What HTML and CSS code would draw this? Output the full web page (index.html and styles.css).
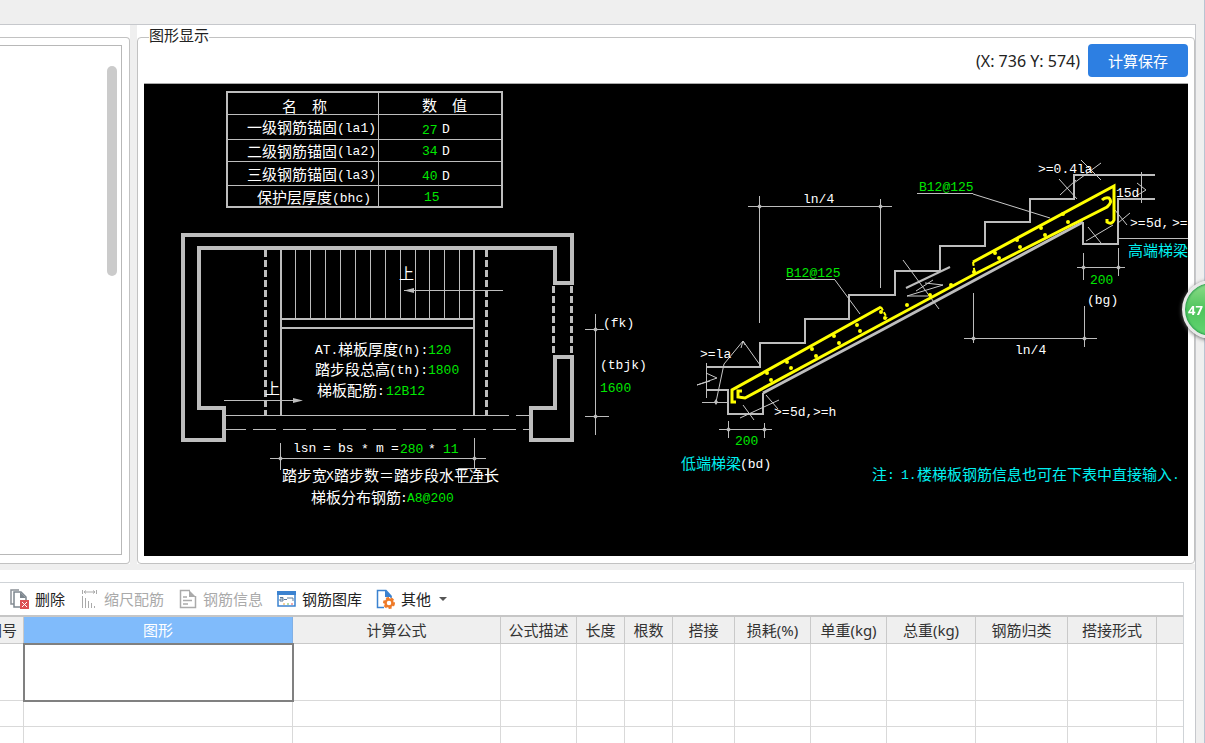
FILE: index.html
```html
<!DOCTYPE html>
<html lang="zh-CN">
<head>
<meta charset="utf-8">
<title>图形显示</title>
<link rel="stylesheet" href="styles.css">
</head>
<body>
<main class="window">
  <div class="upper">
    <section class="side">
      <div class="side-list"><div class="scroll-thumb"></div></div>
    </section>
    <section class="pane">
    <fieldset class="viewer">
      <legend>图形显示</legend>
      <div class="viewer-bar">
        <span class="coords">(X: 736 Y: 574)</span>
        <button class="primary" type="button">计算保存</button>
      </div>
      <svg class="cad" viewBox="144 84 1044 472" role="img" aria-label="AT 型楼梯配筋图">
        <!-- parameter table -->
        <g class="line crisp">
          <rect class="mid" x="227" y="92" width="275" height="115"/>
          <path d="M378.500 92V207M227 114.500H502M227 139.500H502M227 161.500H502M227 185.500H502"/>
        </g>
        <g class="cjk">
          <text x="282" y="112">名</text><text x="312" y="112">称</text>
          <text x="422" y="111">数</text><text x="452" y="111">值</text>
          <text x="247" y="133">一级钢筋锚固</text><text x="247" y="157">二级钢筋锚固</text>
          <text x="247" y="180">三级钢筋锚固</text><text x="257" y="203">保护层厚度</text>
        </g>
        <g class="mono">
          <text x="337" y="132">(la1)</text><text x="337" y="155">(la2)</text>
          <text x="337" y="179">(la3)</text><text x="332" y="202">(bhc)</text>
          <text x="442" y="133">D</text><text x="442" y="155">D</text><text x="442" y="180">D</text>
        </g>
        <g class="mono green">
          <text x="422" y="134">27</text><text x="422" y="155">34</text>
          <text x="422" y="180">40</text><text x="424" y="201">15</text>
        </g>

        <!-- plan: walls -->
        <g class="line crisp">
          <path class="wall" d="M572 285V235H183V440H224V408H199V248H555V283H572M572 355V440H531V408H555V357H574"/>
          <path class="dash-v" d="M265.500 250V415M486.500 250V415M553.500 286V355M571.500 286V355"/>
          <path class="mid" d="M281 248V415M474 248V415M280 319H474M280 328H474"/>
          <path d="M295.500 250V318M310.500 250V318M325.500 250V318M340.500 250V318M355.500 250V318M370.500 250V318M385.500 250V318M400.500 250V318M415.500 250V318M429.500 250V318M444.500 250V318M459.500 250V318"/>
          <path d="M226 415.500H509M516 415.500H530M404 290.500H503M224 400.500H300"/>
          <path class="dash-h" d="M223 429.500H530"/>
          <path d="M595.500 314V435M585 329.500H604M585 416.500H609M270 458.500H486M280.500 443V470M474.500 438V468"/>
          <rect x="458.500" y="468.500" width="29" height="14"/>
        </g>
        <path class="fill" d="M404 290.500L414 288V293ZM303 400.500L293 398V403ZM278 458.500L280.500 456L283 458.500L280.500 461ZM472 458.500L474.500 456L477 458.500L474.500 461ZM593 329.500L595.500 327L598 329.500L595.500 332ZM593 416.500L595.500 414L598 416.500L595.500 419Z"/>
        <g class="cjk">
          <text x="399" y="279">上</text><text x="265" y="394">上</text>
          <text x="338" y="355">梯板厚度</text><text x="315" y="375">踏步段总高</text><text x="317" y="396">梯板配筋</text>
          <text x="282" y="481">踏步宽</text><text x="334" y="481">踏步数</text><text x="379" y="481">＝踏步段水平净长</text>
          <text x="311" y="503">梯板分布钢筋</text>
        </g>
        <g class="mono">
          <text x="315" y="354">AT.</text><text x="397" y="354">(h):</text><text x="389" y="374">(th):</text><text x="377" y="395">:</text>
          <text x="293" y="452">lsn</text><text x="323" y="452">=</text><text x="338" y="452">bs</text><text x="361" y="453">*</text><text x="376" y="452">m</text><text x="391" y="452">=</text><text x="428" y="453">*</text>
          <text x="326" y="480">X</text><text x="400" y="502">:</text>
          <text x="603" y="327">(fk)</text><text x="600" y="369">(tbjk)</text>
        </g>
        <g class="mono green">
          <text x="428" y="354">120</text><text x="428" y="374">1800</text><text x="386" y="395">12B12</text>
          <text x="400" y="453">280</text><text x="443" y="453">11</text><text x="407" y="502">A8@200</text>
          <text x="600" y="392">1600</text>
        </g>

        <!-- elevation: concrete outline -->
        <g class="line crisp mid">
          <path d="M707 367H760V343H805V319H849V295H895V271H940V246H985V222H1030V199H1074V175H1155"/>
          <path d="M707 390H728V414H763V393M1083 222V244H1118V199H1155"/>
        </g>
        <g class="line">
          <path class="soffit" d="M763 393L880 331L1083 222"/>
          <path class="mid" d="M906 288L950 267"/>
        </g>
        <!-- elevation: dimensions -->
        <g class="line crisp">
          <path d="M748 206.500H892M759.500 196V323M880.500 199V288M786 279.500H835M917 193.500H973"/>
          <path d="M719 429.500H772M728.500 421V438M764.500 423V438M706.500 363V398M702 402.500H728"/>
          <path d="M1077 267.500H1125M1083.500 253V280M1118.500 248V276M964 338.500H1097M973.500 293V343M1084.500 306V347"/>
          <path d="M1141.500 172V203M1118 238.500H1188"/>
        </g>
        <g class="line thin">
          <path d="M835 280L860 314M973 194L1050 218M706 373L717 378L697 385L710 381M760 365L743 341L724 364L716 402M741 348L743 341L745 345"/>
          <path d="M740 418L779 400M743 405L754 420M766 395L778 409M903 260L939 309M925 283L943 285L907 296L928 296M916 291L933 280"/>
          <path d="M1081 160L1101 180M1101 163L1074 183M1059 179L1077 199M1060 195L1076 180M1115 210L1127 225M1130 213L1118 223M1088 227L1101 243M1086 241L1113 225M1137 183L1146 190L1136 196"/>
        </g>
        <path class="fill" d="M757 206.500L759.500 204L762 206.500L759.500 209ZM878 206.500L880.500 204L883 206.500L880.500 209ZM726 429.500L728.500 427L731 429.500L728.500 432ZM762 429.500L764.500 427L767 429.500L764.500 432ZM1081 267.500L1083.500 265L1086 267.500L1083.500 270ZM1116 267.500L1118.500 265L1121 267.500L1118.500 270ZM971 338.500L973.500 336L976 338.500L973.500 341ZM1082 338.500L1084.500 336L1087 338.500L1084.500 341ZM714 402L716 399L718 402L716 405Z"/>
        <!-- reinforcement bars -->
        <g class="bar">
          <path d="M736 402H732V390L881 307M742 391H738V397L745 398L880 325L975 274L1107 207Q1113 202 1109 198Q1105 197 1102 200M973 262L1114 186V220Q1112 225 1107 222V219"/>
          <path class="bar-dash" d="M881 307L887 318M973 262L975 275"/>
          <path class="dots" d="M767 373h0M771 380h0M787 362h0M791 368h0M812 349h0M816 356h0M834 336h0M839 343h0M857 325h0M860 331h0M881 312h0M885 318h0M907 305h0M930 295h0M951 285h0M974 272h0M995 253h0M999 258h0M1017 240h0M1020 247h0M1041 228h0M1045 235h0M1063 214h0M1068 222h0"/>
        </g>
        <g class="mono">
          <text x="803" y="203">ln/4</text><text x="1015" y="354">ln/4</text>
          <text x="700" y="358">&gt;=la</text><text x="774" y="416">&gt;=</text><text x="790" y="416">5d,</text><text x="813" y="416">&gt;=h</text>
          <text x="740" y="468">(bd)</text><text x="1087" y="304">(bg)</text>
          <text x="1038" y="173">&gt;=0.4la</text><text x="1116" y="197">15d</text>
          <text x="1130" y="227">&gt;=</text><text x="1146" y="227">5d,</text><text x="1172" y="227">&gt;=</text>
        </g>
        <g class="mono green">
          <text x="786" y="277">B12@125</text><text x="919" y="191">B12@125</text>
          <text x="735" y="445">200</text><text x="1090" y="284">200</text>
        </g>
        <g class="cjk cyan">
          <text x="681" y="469">低端梯梁</text><text x="1128" y="256">高端梯梁</text>
          <text x="872" y="480">注</text><text x="917" y="480">楼梯板钢筋信息也可在下表中直接输入</text>
        </g>
        <g class="mono cyan"><text x="887" y="479">:</text><text x="901" y="479">1.</text><text x="1172" y="479">.</text></g>
      </svg>
    </fieldset>
    </section>
  </div>

  <section class="lower">
    <div class="grid-box">
      <div class="toolbar">
        <button type="button">
          <svg class="icon" viewBox="0 0 19 20"><path d="M4 15H1V1H9" fill="none" stroke="#8a9096" stroke-width="1.500"/><path d="M10 18H4V3H11L16 8V11" fill="#fff" stroke="#7d868e" stroke-width="1.500"/><path d="M10 3L16 9H10Z" fill="#7d868e"/><path d="M10 11H19V20H10Z" fill="#dc5055"/><path d="M12 13L17 18M17 13L12 18" stroke="#fff"/></svg>
          删除
        </button>
        <button type="button" disabled>
          <svg class="icon" viewBox="0 0 19 20"><g fill="none" stroke="#aaa"><path d="M3.500 1V5M17.500 1V5M5 3H16M7 1.500L5 3L7 4.500M14 1.500L16 3L14 4.500"/><path d="M3.500 7V19M6.500 9V19M9.500 12V19M12.500 14V19M15.500 17V19"/></g></svg>
          缩尺配筋
        </button>
        <button type="button" disabled>
          <svg class="icon" viewBox="0 0 19 20"><path d="M12 1.500H2.500V18.500H17.500V7" fill="none" stroke="#aaa" stroke-width="1.500"/><path d="M11 1L18 8H11Z" fill="#aaa"/><path d="M5 8H9M5 11.500H14M5 15H10" stroke="#aaa" stroke-width="1.500"/></svg>
          钢筋信息
        </button>
        <button type="button">
          <svg class="icon" viewBox="0 0 19 20"><path d="M1 3H18V17H1Z" fill="#fff" stroke="#3b82d0" stroke-width="1.500"/><path d="M0 2H19V6H0Z" fill="#3b82d0"/><path d="M3 8.500H6V12H3V10H6M7 10.500H10M10 9H16V12" fill="none" stroke="#5a7a9a"/><path d="M6 15H8" stroke="#e8a33a"/><path d="M10 15H12" stroke="#76b852"/><path d="M14 15H16" stroke="#e05a5a"/></svg>
          钢筋图库
        </button>
        <button type="button">
          <svg class="icon" viewBox="0 0 19 20"><path d="M8 18.500H1.500V1.500H10L15 7V9" fill="none" stroke="#3b82d0" stroke-width="1.500"/><path d="M9 1L16 8H9Z" fill="#3b82d0"/><circle cx="13" cy="14" r="3.500" fill="#fff" stroke="#ee7a28" stroke-width="2.500"/><circle cx="13" cy="14" r="5" fill="none" stroke="#ee7a28" stroke-width="2" stroke-dasharray="3 2"/></svg>
          其他
          <span class="caret"></span>
        </button>
      </div>
      <table class="grid">
        <colgroup><col class="w24"><col class="w269"><col class="w208"><col class="w76"><col class="w48"><col class="w48"><col class="w62"><col class="w76"><col class="w76"><col class="w89"><col class="w92"><col class="w89"><col></colgroup>
        <thead>
          <tr><th><div class="cut">图号</div></th><th class="active">图形</th><th>计算公式</th><th>公式描述</th><th>长度</th><th>根数</th><th>搭接</th><th>损耗(%)</th><th>单重(kg)</th><th>总重(kg)</th><th>钢筋归类</th><th>搭接形式</th><th></th></tr>
        </thead>
        <tbody>
          <tr class="tall"><td></td><td class="selected"></td><td></td><td></td><td></td><td></td><td></td><td></td><td></td><td></td><td></td><td></td><td></td></tr>
          <tr><td></td><td></td><td></td><td></td><td></td><td></td><td></td><td></td><td></td><td></td><td></td><td></td><td></td></tr>
          <tr><td></td><td></td><td></td><td></td><td></td><td></td><td></td><td></td><td></td><td></td><td></td><td></td><td></td></tr>
        </tbody>
      </table>
    </div>
  </section>
</main>
<button class="ball" type="button">47</button>
</body>
</html>
```
FILE: styles.css
```css
* { box-sizing: border-box; }

body {
  margin: 0;
  height: 100vh;
  overflow: hidden;
  padding: 24px 8px 0 0;
  border-right: 1px solid #b9c4d2;
  background: #efefef;
  color: #222;
  font: 15px/20px "Noto Sans", "Noto Sans CJK SC", sans-serif;
}

button { font: inherit; color: inherit; }

.window {
  height: 100%;
  display: flex;
  flex-direction: column;
  overflow: hidden;
  border-top: 1px solid #c6c8cc;
  border-right: 1px solid #c6c8cc;
}

.upper {
  display: grid;
  grid-template-columns: 130px 1fr;
  gap: 7px;
  padding-bottom: 6px;
}

.side {
  display: flex;
  padding-top: 12px;
  background: #fff;
  position: relative;
}
.side::before {
  content: "";
  position: absolute;
  inset: 12px 0 0 0;
  border: 1px solid #c2c2c2;
  border-left: 0;
  border-radius: 0 4px 4px 0;
}
.side-list {
  flex: 1;
  display: flex;
  justify-content: flex-end;
  margin: 8px 8px 9px 0;
  padding: 20px 4px 0 0;
  border: 1px solid #b8b8b8;
  border-left: 0;
}
.scroll-thumb {
  width: 10px;
  height: 210px;
  border-radius: 5px;
  background: #cbcbcb;
}

.pane {
  min-width: 0;
  padding-top: 5px;
  background: #fff;
}
.viewer {
  min-width: 0;
  margin: 0;
  padding: 0 6px 7px;
  border: 1px solid #c2c2c2;
  border-radius: 4px;
}
.viewer legend {
  margin-left: 5px;
  padding: 0 0 4px;
  line-height: 10px;
}
.viewer-bar {
  display: flex;
  justify-content: flex-end;
  align-items: center;
  gap: 8px;
  padding-bottom: 6px;
}
.coords { font-size: 16px; }
.primary {
  width: 100px;
  height: 33px;
  padding: 0;
  border: 0;
  border-radius: 4px;
  background: #2d7fe2;
  color: #fff;
}

.cad {
  display: block;
  width: 100%;
  background: #000;
  border-top: 1px solid #aaa;
}
.line { fill: none; stroke: #bdbdbd; stroke-width: 1px; }
.crisp { shape-rendering: crispEdges; }
.thin { stroke: #c8c8c8; }
.mid { stroke-width: 2px; }
.wall { stroke-width: 4px; }
.soffit { stroke-width: 3px; }
.dash-v { stroke-width: 3px; stroke-dasharray: 7px 3px; }
.dash-h { stroke-dasharray: 23px 7px; }
.fill { fill: #bdbdbd; }
.bar { fill: none; stroke: #ff0; stroke-width: 3px; }
.bar-dash { stroke-width: 2px; stroke-dasharray: 4px 2px; }
.dots { stroke-width: 4px; stroke-linecap: round; }
.cjk { fill: #fff; font: 15px "Noto Sans CJK SC", sans-serif; }
.mono { fill: #fff; font: 13px "Liberation Mono", monospace; }
.green { fill: #00e800; }
.cyan { fill: #00f0f0; }

.lower {
  flex: 1;
  padding: 12px 11px 0 0;
  background: #fff;
}
.grid-box {
  height: 100%;
  border-top: 1px solid #cfd3d7;
  border-right: 1px solid #cfd3d7;
}
.toolbar {
  display: flex;
  align-items: center;
  gap: 14px;
  height: 34px;
  padding-left: 10px;
  border-bottom: 2px solid #c6c6c6;
}
.toolbar button {
  display: flex;
  align-items: center;
  gap: 6px;
  padding: 0;
  border: 0;
  background: none;
}
.toolbar button:disabled { color: #aaa; }
.icon { width: 19px; height: 20px; }
.caret {
  margin-left: 2px;
  border: 4px solid transparent;
  border-top-color: #555;
  border-bottom: 0;
}

.grid {
  width: 100%;
  table-layout: fixed;
  border-collapse: separate;
  border-spacing: 0;
}
.grid th, .grid td {
  padding: 0;
  border-right: 1px solid #d9d9d9;
  border-bottom: 1px solid #d9d9d9;
}
.grid th {
  height: 27px;
  border-color: #c9c9c9;
  background: #efefef;
  color: #333;
  font-weight: 400;
}
.grid th.active { background: #80bbfb; border-color: #80b0e6; color: #fff; }
.grid td { height: 26px; }
.grid .tall td { height: 57px; }
.grid .selected { outline: 2px solid #808080; outline-offset: -1px; }
.grid th:last-child, .grid td:last-child { border-right: 0; }
.cut {
  display: flex;
  justify-content: flex-end;
  overflow: hidden;
  padding-right: 6px;
  white-space: nowrap;
}
.w24 { width: 24px; }
.w48 { width: 48px; }
.w62 { width: 62px; }
.w76 { width: 76px; }
.w89 { width: 89px; }
.w92 { width: 92px; }
.w208 { width: 208px; }
.w269 { width: 269px; }

.ball {
  position: fixed;
  top: 280px;
  right: -36px;
  width: 59px;
  height: 59px;
  padding: 0 0 0 3px;
  border: 3px solid #e8e8e8;
  border-radius: 50%;
  background: linear-gradient(#8fdc8a, #4ec45c 50%, #63d673);
  box-shadow: 0 1px 4px #666, inset 0 0 2px 1px #2c9a50;
  color: #fff;
  font: bold 13px "Open Sans", sans-serif;
  text-align: left;
}
```
